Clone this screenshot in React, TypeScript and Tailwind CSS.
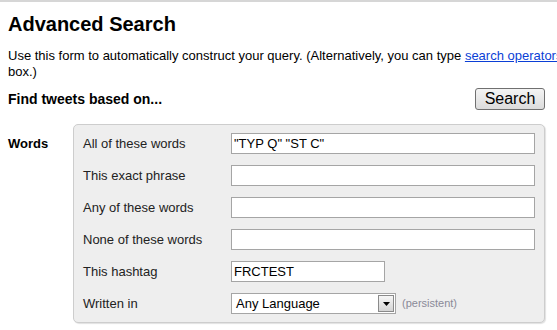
import React from 'react';

const FONT = { fontFamily: '"Liberation Sans", Arial, sans-serif' };

const INPUT = "h-[21px] bg-white border border-[#a5a5a5] px-[2px] text-[13px] text-black outline-none";

function Row({ label, children }: { label: string; children: React.ReactNode }) {
    return (
        <div className="flex items-center h-[21px]">
            <label className="w-[148px] shrink-0 text-[13px] leading-4 text-[#222]">{label}</label>
            {children}
        </div>
    );
}

export default function App() {
    return (
        <div className="w-[557px] h-[330px] overflow-hidden bg-white border-t-2 border-[#d6d6d6] text-black" style={FONT}>
            <div className="px-2 pt-[10px]">
                <h1 className="text-[20px] leading-6 font-bold">Advanced Search</h1>
                <p className="mt-3 text-[13px] leading-4 whitespace-nowrap">
                    Use this form to automatically construct your query. (Alternatively, you can type{' '}
                    <a href="#" className="text-[#0b3fd6] underline">search operators</a> into the search
                    <br />box.)
                </p>
                <div className="mt-2 flex items-center justify-between w-[537px]">
                    <h2 className="text-[14px] leading-[17px] font-bold">Find tweets based on...</h2>
                    <button className="w-[70px] h-[22px] rounded-[3px] border border-[#707070] bg-gradient-to-b from-[#f4f4f4] to-[#dcdcdc] text-[16px] leading-5 text-black">
                        Search
                    </button>
                </div>
                <div className="mt-[14px] flex">
                    <div className="w-[65px] shrink-0 pt-3 text-[13px] leading-4 font-bold">Words</div>
                    <div className="w-[472px] bg-[#eeeeee] border border-[#cdcdcd] rounded-[5px] shadow-[1px_1px_1px_rgba(0,0,0,0.12)] pl-[9px] pt-[8px] pb-[8px] flex flex-col gap-[11px]">
                        <Row label="All of these words">
                            <input className={`${INPUT} w-[304px]`} defaultValue={'"TYP Q" "ST C"'} />
                        </Row>
                        <Row label="This exact phrase">
                            <input className={`${INPUT} w-[304px]`} />
                        </Row>
                        <Row label="Any of these words">
                            <input className={`${INPUT} w-[304px]`} />
                        </Row>
                        <Row label="None of these words">
                            <input className={`${INPUT} w-[304px]`} />
                        </Row>
                        <Row label="This hashtag">
                            <input className={`${INPUT} w-[154px]`} defaultValue="FRCTEST" />
                        </Row>
                        <Row label="Written in">
                            <div className="flex items-center w-[165px] h-[21px] bg-white border border-[#a5a5a5]">
                                <span className="flex-1 pl-[4px] text-[13px] leading-4">Any Language</span>
                                <span className="w-[16px] h-[17px] mr-[1px] flex items-center justify-center border border-[#8a8a8a] bg-gradient-to-b from-[#f6f6f6] to-[#d4d4d4]">
                                    <svg width="7" height="4" viewBox="0 0 7 4"><path d="M0 0h7L3.5 4z" fill="#000" /></svg>
                                </span>
                            </div>
                            <span className="ml-[6px] text-[11px] text-[#8a8a98]">(persistent)</span>
                        </Row>
                    </div>
                </div>
            </div>
        </div>
    );
}
